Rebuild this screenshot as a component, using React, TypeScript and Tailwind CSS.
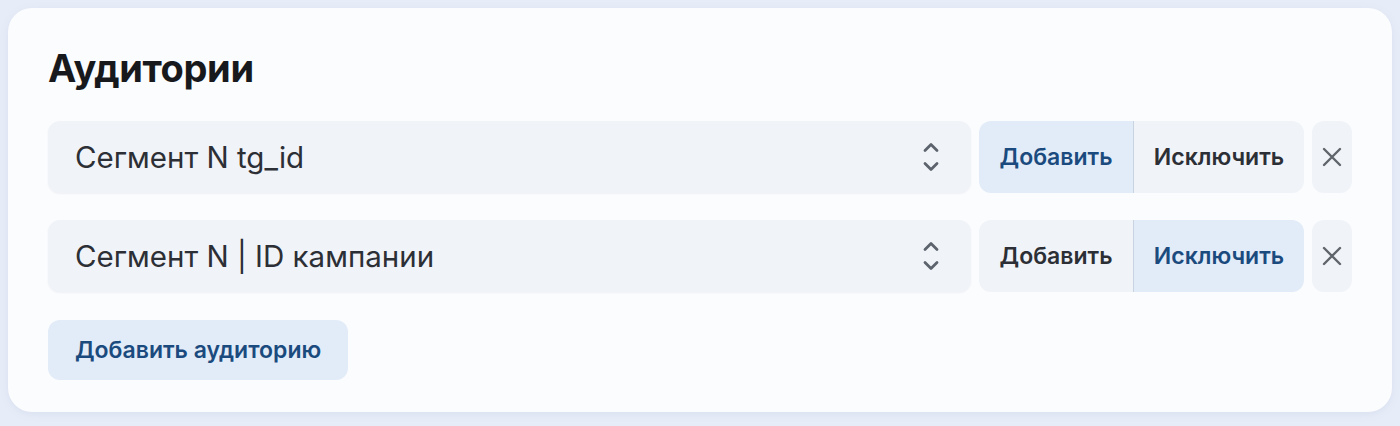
import { useState } from "react";

type Mode = "include" | "exclude";

type Audience = {
  id: number;
  segment: string;
  mode: Mode;
};

const initial: Audience[] = [
  { id: 1, segment: "Сегмент N tg_id", mode: "include" },
  { id: 2, segment: "Сегмент N | ID кампании", mode: "exclude" },
];

function UpDownIcon() {
  return (
    <svg width="16" height="32" viewBox="0 0 16 32" fill="none" className="text-[#5c636d]">
      <path d="M2 9.5 8 3.5l6 6" stroke="currentColor" strokeWidth="2.8" strokeLinecap="round" strokeLinejoin="round" />
      <path d="M2 22.5l6 6 6-6" stroke="currentColor" strokeWidth="2.8" strokeLinecap="round" strokeLinejoin="round" />
    </svg>
  );
}

function CloseIcon() {
  return (
    <svg width="20" height="20" viewBox="0 0 20 20" fill="none" className="text-[#60656c]">
      <path d="M2 2l16 16M18 2 2 18" stroke="currentColor" strokeWidth="2.4" strokeLinecap="round" />
    </svg>
  );
}

function AudienceRow({ item, onMode, onRemove }: { item: Audience; onMode: (m: Mode) => void; onRemove: () => void }) {
  const seg = (active: boolean) =>
    `h-full text-[23px] font-semibold ${active ? "bg-[#e2ecf8] text-[#1b4b7e]" : "bg-[#f0f3f8] text-[#2c2f35]"}`;

  return (
    <div className="flex h-[72px] items-stretch gap-2">
      <button className="flex flex-1 items-center justify-between rounded-xl bg-[#f0f3f8] pl-[27px] pr-[32px] shadow-[0_1px_2px_rgba(30,50,90,0.06)]">
        <span className="text-[29.5px] text-[#2c2f35]">{item.segment}</span>
        <UpDownIcon />
      </button>
      <div className="flex overflow-hidden rounded-xl">
        <button onClick={() => onMode("include")} className={`${seg(item.mode === "include")} w-[154px]`}>
          Добавить
        </button>
        <button
          onClick={() => onMode("exclude")}
          className={`${seg(item.mode === "exclude")} w-[171px] border-l border-[#c9d4e2]`}
        >
          Исключить
        </button>
      </div>
      <button onClick={onRemove} className="flex w-10 items-center justify-center rounded-xl bg-[#f0f3f8]">
        <CloseIcon />
      </button>
    </div>
  );
}

export default function App() {
  const [items, setItems] = useState<Audience[]>(initial);

  const setMode = (id: number, mode: Mode) =>
    setItems((prev) => prev.map((a) => (a.id === id ? { ...a, mode } : a)));

  return (
    <div className="min-h-[426px] bg-[#e7edf8] p-2 font-['Inter','Noto_Sans',sans-serif]">
      <div className="rounded-3xl bg-[#fbfcfe] px-10 pt-10 pb-8 shadow-[0_2px_10px_rgba(60,80,140,0.08)]">
        <h1 className="mb-[33px] text-[38px] leading-[40px] font-bold tracking-[-0.01em] text-[#18191c]">Аудитории</h1>

        <div className="flex flex-col gap-[27px]">
          {items.map((item) => (
            <AudienceRow
              key={item.id}
              item={item}
              onMode={(m) => setMode(item.id, m)}
              onRemove={() => setItems((prev) => prev.filter((a) => a.id !== item.id))}
            />
          ))}
        </div>

        <button className="mt-[28px] h-[60px] rounded-xl bg-[#e2ecf8] px-[27px] text-[23px] font-semibold text-[#1b4b7e]">
          Добавить аудиторию
        </button>
      </div>
    </div>
  );
}
